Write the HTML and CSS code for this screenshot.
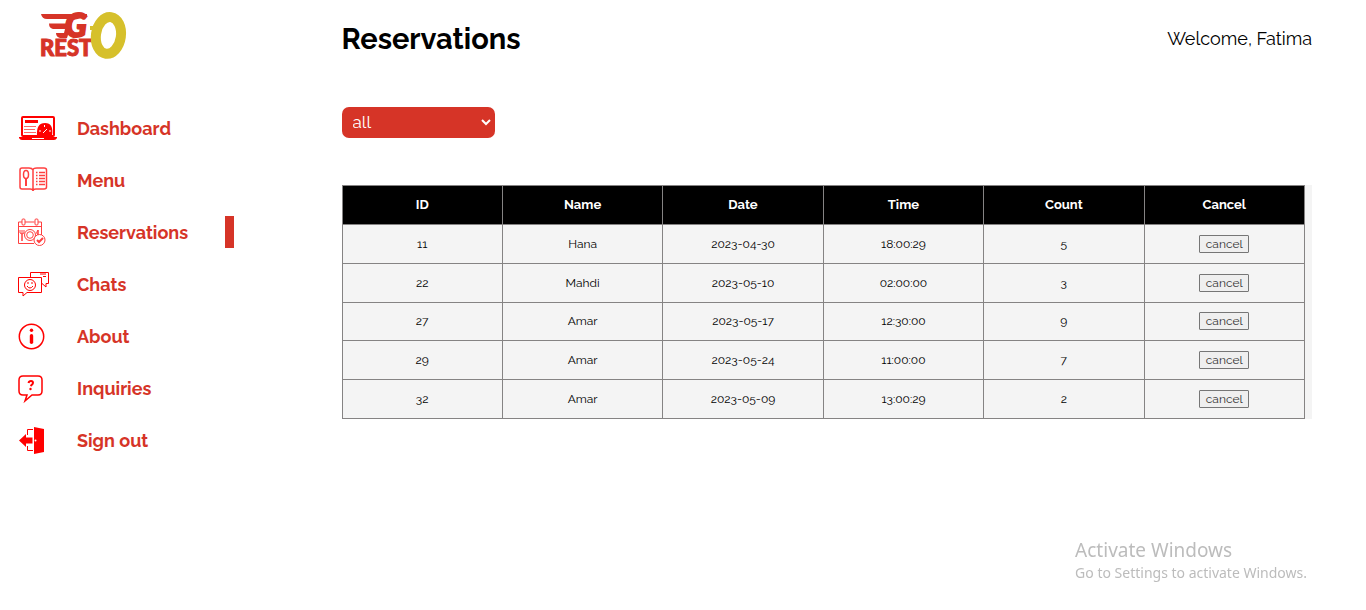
FILE: index.html
```html
<!DOCTYPE html>
<html lang="en">
<head>
<meta charset="utf-8">
<meta name="viewport" content="width=device-width, initial-scale=1">
<title>Reservations</title>
<link rel="stylesheet" href="styles.css">
</head>
<body>
<div class="layout">
  <aside class="sidebar">
    <a class="logo" href="#" aria-label="Go Resto">
      <svg class="logo-art" width="90" height="52" viewBox="0 0 90 52">
        <path class="logo-red" d="M2 5H48V8L34 11L28 29H21Q17 28 17 24H25L26 20H14Q10 19 10 14.500H27L28 10H8Q3 10 2 5Z"/>
        <text class="logo-g" x="26" y="28">G</text>
        <text class="logo-rest" x="1" y="47">REST</text>
        <path class="logo-gold-line" d="M51 19H60"/>
        <ellipse class="logo-o" cx="69.500" cy="26.500" rx="12.500" ry="18.500" transform="rotate(8 70 26)"/>
      </svg>
    </a>
    <nav class="nav">
      <a class="nav-item" href="#">
        <svg class="icon" viewBox="0 0 48 32">
          <rect class="line bold" x="12" y="5" width="32" height="19" rx="1"/>
          <path class="solid" d="M9 25H47V26Q46 28 44 28H12Q10 28 9 26ZM15 8H28V11H15ZM27 24Q26 11 35 11T42 24Z"/>
          <path class="line thin pale" d="M14 14.500H26M14 17.500H25M14 20.500H26"/>
          <path class="cut" d="M33 21L37 17M29 19H31M34.500 13V15M39 19H41M22 26.500H34"/>
        </svg>
        <span>Dashboard</span>
      </a>
      <a class="nav-item" href="#">
        <svg class="icon soft" viewBox="0 0 48 32">
          <path class="line" d="M23 6Q22 4 19 4H12Q10 4 10 6V23Q10 25 12 25H20Q23 25 23 27Q23 25 26 25H34Q36.500 25 36.500 23V6Q36.500 4 34 4H27Q23 4 23 6V27"/>
          <ellipse class="line" cx="16" cy="10.500" rx="2.500" ry="4"/>
          <path class="line bold" d="M16 15V22"/>
          <path class="line" d="M29 8.500H35M29 11.500H35M29 14.500H35M29 17.500H35M29 20.500H35M26 8.500H27.500M26 11.500H27.500M26 14.500H27.500M26 17.500H27.500M26 20.500H27.500"/>
        </svg>
        <span>Menu</span>
      </a>
      <a class="nav-item active" href="#" aria-current="page">
        <svg class="icon soft" viewBox="0 0 48 32">
          <path class="line thin" d="M24 27.500H8.500V6H12M15 6H24.500M28 6H31.500V19M9 10.500H31"/>
          <rect class="line thin" x="12" y="3" width="3" height="6" rx="1"/>
          <rect class="line thin" x="25" y="3" width="3" height="6" rx="1"/>
          <circle class="line thin" cx="20" cy="19" r="5.500"/>
          <circle class="line thin" cx="20" cy="19" r="3.300"/>
          <path class="line" d="M12 18V25M28 14V19"/>
          <path class="line thin" d="M10 14V17Q12 19 14 17V14M12 14V18M28 14Q25 17 28 19"/>
          <circle class="line thin backed" cx="29.500" cy="24" r="5.500"/>
          <path class="line bold" d="M27 24L29 26L33 22"/>
        </svg>
        <span>Reservations</span>
      </a>
      <a class="nav-item" href="#">
        <svg class="icon" viewBox="0 0 48 32">
          <path class="line thin" d="M20.500 9V4.500H38.500V15.500H36V19L32 15.500H31M30 6H36M33 8.500H36"/>
          <path class="line thin" d="M8.500 9.500H31.500V24.500H17L13 28V24.500H8.500Z"/>
          <circle class="line thin" cx="20" cy="17" r="5.500"/>
          <path class="line thin" d="M17 18Q20 22 23 18M17 15H19M21 15H23"/>
        </svg>
        <span>Chats</span>
      </a>
      <a class="nav-item" href="#">
        <svg class="icon" viewBox="0 0 48 32">
          <circle class="line" cx="21.500" cy="16.500" r="12.200"/>
          <circle class="solid" cx="21.500" cy="10.300" r="1.700"/>
          <rect class="solid" x="19.800" y="14" width="3.400" height="10" rx="1.700"/>
        </svg>
        <span>About</span>
      </a>
      <a class="nav-item" href="#">
        <svg class="icon" viewBox="0 0 48 32">
          <path class="line" d="M13 4H28Q32 4 32 8V19Q32 23 28 23H22L15 29L17 23H13Q9 23 9 19V8Q9 4 13 4Z"/>
          <path class="line bold" d="M18.500 11Q19 9 21 9T23 11Q23 12 20.500 14"/>
          <circle class="solid" cx="20.500" cy="17" r="1.200"/>
        </svg>
        <span>Inquiries</span>
      </a>
      <a class="nav-item" href="#">
        <svg class="icon" viewBox="0 0 48 32">
          <path class="solid" d="M24 3L34 5V28L24 30ZM9 16.500L16 10V13.500H22.500V19.500H16V23Z"/>
          <path class="line thin" d="M23 5.500H17.500V11M17.500 22V26.500H23"/>
          <circle class="dot" cx="25.500" cy="16.500" r="1"/>
        </svg>
        <span>Sign out</span>
      </a>
    </nav>
  </aside>
  <main class="main">
    <header class="topbar">
      <h1>Reservations</h1>
      <p class="welcome">Welcome, Fatima</p>
    </header>
    <div class="filter">
      <select class="filter-select" aria-label="Filter reservations">
        <option>all</option>
      </select>
      <svg class="chevron" width="10" height="7" viewBox="0 0 10 7"><path d="M1 1L5 5L9 1"/></svg>
    </div>
    <div class="table-wrap">
      <table class="table">
        <thead>
          <tr><th>ID</th><th>Name</th><th>Date</th><th>Time</th><th>Count</th><th>Cancel</th></tr>
        </thead>
        <tbody>
          <tr><td>11</td><td>Hana</td><td>2023-04-30</td><td>18:00:29</td><td>5</td><td><button class="cancel" type="button">cancel</button></td></tr>
          <tr><td>22</td><td>Mahdi</td><td>2023-05-10</td><td>02:00:00</td><td>3</td><td><button class="cancel" type="button">cancel</button></td></tr>
          <tr><td>27</td><td>Amar</td><td>2023-05-17</td><td>12:30:00</td><td>9</td><td><button class="cancel" type="button">cancel</button></td></tr>
          <tr><td>29</td><td>Amar</td><td>2023-05-24</td><td>11:00:00</td><td>7</td><td><button class="cancel" type="button">cancel</button></td></tr>
          <tr><td>32</td><td>Amar</td><td>2023-05-09</td><td>13:00:29</td><td>2</td><td><button class="cancel" type="button">cancel</button></td></tr>
        </tbody>
      </table>
    </div>
  </main>
</div>
<div class="watermark">
  <p class="watermark-title">Activate Windows</p>
  <p class="watermark-text">Go to Settings to activate Windows.</p>
</div>
</body>
</html>
```
FILE: styles.css
```css
* {
  box-sizing: border-box;
}

body {
  margin: 0;
  min-height: 100vh;
  background: #fff;
  color: #000;
  font-family: Raleway, Lato, "Open Sans", sans-serif;
}

h1,
p {
  margin: 0;
}

.layout {
  display: grid;
  grid-template-columns: 1fr 3fr;
}

.sidebar {
  padding-top: 9px;
}

.logo {
  display: block;
  width: 90px;
  height: 52px;
  margin-left: 39px;
}

.logo-art {
  display: block;
  overflow: visible;
}

.logo-red {
  fill: #d63427;
}

.logo-g {
  fill: #d63427;
  stroke: #d63427;
  stroke-width: 2px;
  font: italic 900 32px Lato, sans-serif;
}

.logo-rest {
  fill: #d63427;
  stroke: #d63427;
  stroke-width: 1px;
  font: 900 22px Lato, sans-serif;
}

.logo-gold-line {
  fill: none;
  stroke: #d6c02b;
  stroke-width: 4px;
}

.logo-o {
  fill: #fff;
  stroke: #d6c02b;
  stroke-width: 10px;
}

.nav {
  display: flex;
  flex-direction: column;
  gap: 20px;
  width: 234px;
  margin-top: 51px;
  padding-left: 10px;
}

.nav-item {
  display: flex;
  align-items: center;
  gap: 19px;
  height: 32px;
  color: #d63427;
  font-size: 18px;
  font-weight: 700;
  text-decoration: none;
}

.nav-item.active {
  border-right: 9px solid #d63427;
}

.icon {
  flex: none;
  width: 48px;
  height: 32px;
}

.line {
  fill: none;
  stroke: #f00;
  stroke-width: 1.500px;
}

.thin {
  stroke-width: 1px;
}

.bold {
  stroke-width: 2px;
}

.soft {
  opacity: 0.75;
}

.pale {
  opacity: 0.6;
}

.line.backed,
.dot {
  fill: #fff;
}

.solid {
  fill: #f00;
}

.cut {
  fill: none;
  stroke: #fff;
  stroke-width: 1px;
}

.main {
  min-width: 0;
  padding-right: 54px;
}

.topbar {
  display: flex;
  align-items: center;
  justify-content: space-between;
  height: 77px;
}

h1 {
  font-size: 29px;
  font-weight: 700;
}

.welcome {
  font-size: 18px;
}

.filter {
  display: grid;
  width: 153px;
  margin-top: 30px;
  align-items: center;
}

.filter-select {
  grid-area: 1 / 1;
  width: 100%;
  height: 31px;
  padding: 0 11px 1px;
  border: 0;
  border-radius: 7px;
  appearance: none;
  background: #d63427;
  color: #fff;
  font-family: inherit;
  font-size: 17px;
}

.chevron {
  grid-area: 1 / 1;
  justify-self: end;
  margin-right: 4px;
  pointer-events: none;
}

.chevron path {
  fill: none;
  stroke: #fff;
  stroke-width: 2px;
}

.table-wrap {
  margin-top: 47px;
  padding-right: 7px;
  background: #f4f4f4;
}

.table {
  width: 100%;
  height: 234px;
  border-collapse: collapse;
  table-layout: fixed;
  font-size: 12px;
}

.table th,
.table td {
  padding: 0;
  border: 1px solid #858383;
  text-align: center;
}

.table th {
  height: 39px;
  padding-bottom: 2px;
  background: #000;
  color: #fff;
  font-size: 13px;
  font-weight: 700;
}

.cancel {
  display: inline-block;
  width: 50px;
  height: 18px;
  padding: 0;
  border: 1px solid #767676;
  border-radius: 1px;
  background: #efefef;
  color: #333;
  font-family: inherit;
  font-size: 12px;
  line-height: 16px;
}

.watermark {
  position: fixed;
  right: 59px;
  bottom: 27px;
  color: #bcbcbc;
  font-family: "Segoe UI", "Noto Sans", sans-serif;
  pointer-events: none;
}

.watermark-title {
  font-size: 19px;
  line-height: 26px;
}

.watermark-text {
  font-size: 14px;
  line-height: 20px;
}
```
